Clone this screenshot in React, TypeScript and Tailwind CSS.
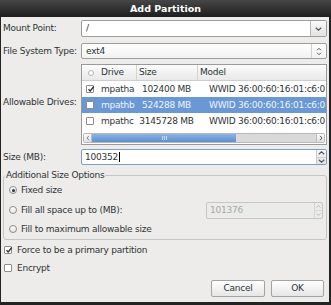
import React from "react";

const Chevron = ({ up = false }: { up?: boolean }) => (
  <svg width="7" height="4" viewBox="0 0 7 4" className={up ? "rotate-180" : ""}>
    <polyline points="0.8,0.8 3.5,3.2 6.2,0.8" fill="none" stroke="#555" strokeWidth="1.2" />
  </svg>
);

const UpDown = ({ color = "#555" }: { color?: string }) => (
  <svg width="6" height="9" viewBox="0 0 6 9">
    <polyline points="1,3.3 3,1.3 5,3.3" fill="none" stroke={color} strokeWidth="1" />
    <polyline points="1,5.7 3,7.7 5,5.7" fill="none" stroke={color} strokeWidth="1" />
  </svg>
);

const Check = () => (
  <svg width="8" height="8" viewBox="0 0 8 8" className="absolute -top-px left-0">
    <polyline points="1.5,4.2 3.2,6 6.8,1.5" fill="none" stroke="#333" strokeWidth="1.3" />
  </svg>
);

const CheckBox = ({ checked = false }: { checked?: boolean }) => (
  <div className="relative w-[8px] h-[8px] shrink-0 border border-[#8c8c8c] bg-white rounded-[1px]">
    {checked && <Check />}
  </div>
);

const Radio = ({ checked = false }: { checked?: boolean }) => (
  <div className="w-[8px] h-[8px] shrink-0 rounded-full border border-[#8c8c8c] bg-gradient-to-b from-white to-[#e4e4e4] flex items-center justify-center">
    {checked && <div className="w-[3px] h-[3px] rounded-full bg-[#2e3436]" />}
  </div>
);

const drives = [
  { name: "mpatha", size: "102400 MB", checked: true, selected: false },
  { name: "mpathb", size: "524288 MB", checked: false, selected: true },
  { name: "mpathc", size: "3145728 MB", checked: false, selected: false },
];

export default function App() {
  return (
    <div className="w-[331px] h-[305px] bg-[#232323] flex flex-col font-['DejaVu_Sans',sans-serif] text-[9px] tracking-[-0.25px] text-[#2e3436] leading-none">
      <div className="h-[17px] shrink-0 flex items-center justify-center bg-gradient-to-b from-[#474747] to-[#1e1e1e] text-white font-bold text-[9.5px] tracking-normal">
        Add Partition
      </div>

      <div className="flex-1 ml-px mr-[2px] mb-[3px] bg-[#edeceb] flex flex-col px-[2px] pt-[3px]">
        {/* Mount point */}
        <div className="flex items-center h-[17px]">
          <div className="w-[78px] shrink-0">Mount Point:</div>
          <div className="flex-1 h-full flex border border-[#9d9d9d] rounded-[2px] bg-white overflow-hidden">
            <div className="flex-1 flex items-center pl-[4px]">/</div>
            <div className="w-[16px] border-l border-[#b9b9b9] bg-gradient-to-b from-[#fafafa] to-[#e2e2e2] flex items-center justify-center">
              <Chevron />
            </div>
          </div>
        </div>

        {/* File system */}
        <div className="flex items-center h-[16px] mt-[6px]">
          <div className="w-[78px] shrink-0">File System Type:</div>
          <div className="flex-1 h-full flex border border-[#9d9d9d] rounded-[2px] bg-gradient-to-b from-white to-[#f2f2f2]">
            <div className="flex-1 flex items-center pl-[4px]">ext4</div>
            <div className="w-[15px] border-l border-[#d0d0d0] flex items-center justify-center">
              <UpDown />
            </div>
          </div>
        </div>

        {/* Drives */}
        <div className="flex items-center mt-[5px]">
          <div className="w-[78px] shrink-0 pb-[4px]">Allowable Drives:</div>
          <div className="flex-1 h-[81px] border border-[#9a9a9a] bg-white flex flex-col overflow-hidden">
            <div className="h-[16px] shrink-0 flex items-stretch bg-gradient-to-b from-[#fbfbfb] to-[#e9e9e9] border-b border-[#cdcdcd]">
              <div className="w-[15px] flex items-center pl-[6px]">
                <div className="w-[6px] h-[6px] rounded-full border border-[#b4b4b4] bg-white" />
              </div>
              <div className="w-[39px] flex items-center pl-[4px]">Drive</div>
              <div className="w-[61px] flex items-center pl-[2px] border-l border-[#d2d2d2]">Size</div>
              <div className="flex-1 flex items-center pl-[2px] border-l border-[#d2d2d2]">Model</div>
            </div>
            {drives.map((d) => (
              <div
                key={d.name}
                className={
                  "h-[16px] shrink-0 flex items-center whitespace-nowrap " +
                  (d.selected ? "bg-[#6a98d4] text-[#eef4fb]" : "")
                }
              >
                <div className="w-[15px] pl-[4px]">
                  <CheckBox checked={d.checked} />
                </div>
                <div className="w-[39px] pl-[4px]">{d.name}</div>
                <div className="w-[61px] text-center">{d.size}</div>
                <div className="flex-1 pl-[12px] overflow-hidden">WWID 36:00:60:16:01:c6:0</div>
              </div>
            ))}
            <div className="flex-1" />
            <div className="h-[10px] mx-px mb-px flex border border-[#b8b8b8] rounded-[2px] bg-[#d9d9d9] overflow-hidden">
              <div className="w-[8px] bg-gradient-to-b from-[#fafafa] to-[#e0e0e0] border-r border-[#bdbdbd] flex items-center justify-center">
                <svg width="4" height="6" viewBox="0 0 4 6">
                  <polyline points="3,0.8 1,3 3,5.2" fill="none" stroke="#888" strokeWidth="1" />
                </svg>
              </div>
              <div className="w-[144px] bg-gradient-to-b from-[#8fb3e2] to-[#5d8fcf] flex items-center justify-center">
                <div className="flex gap-px">
                  <div className="w-px h-[4px] bg-[#c9dbf2]" />
                  <div className="w-px h-[4px] bg-[#c9dbf2]" />
                  <div className="w-px h-[4px] bg-[#c9dbf2]" />
                </div>
              </div>
              <div className="flex-1" />
              <div className="w-[8px] bg-gradient-to-b from-[#fafafa] to-[#e0e0e0] border-l border-[#bdbdbd] flex items-center justify-center">
                <svg width="4" height="6" viewBox="0 0 4 6">
                  <polyline points="1,0.8 3,3 1,5.2" fill="none" stroke="#555" strokeWidth="1" />
                </svg>
              </div>
            </div>
          </div>
        </div>

        {/* Size */}
        <div className="flex items-center h-[16px] mt-[4px]">
          <div className="w-[78px] shrink-0">Size (MB):</div>
          <div className="flex-1 h-full flex border border-[#7d9cc8] rounded-[2px] bg-white overflow-hidden">
            <div className="flex-1 flex items-center pl-[3px]">
              100352
              <div className="w-px h-[10px] bg-black ml-px" />
            </div>
            <div className="w-[10px] flex flex-col border-l border-[#c8c8c8] bg-gradient-to-b from-[#f7f7f7] to-[#e3e3e3]">
              <div className="flex-1 flex items-center justify-center border-b border-[#cfcfcf]">
                <Chevron up />
              </div>
              <div className="flex-1 flex items-center justify-center">
                <Chevron />
              </div>
            </div>
          </div>
        </div>

        {/* Additional options */}
        <fieldset className="mt-[4px] border border-[#c4c4c4] rounded-[3px] pb-[2px]">
          <legend className="ml-px px-px leading-[12px]">Additional Size Options</legend>
          <div className="h-[18px] flex items-center pl-[5px] gap-[4px]">
            <Radio checked />
            <span>Fixed size</span>
          </div>
          <div className="h-[22px] flex items-center pl-[5px] pr-[3px]">
            <Radio />
            <span className="ml-[4px] flex-1">Fill all space up to (MB):</span>
            <div className="w-[117px] h-[17px] flex border border-[#c6c6c6] rounded-[2px] bg-[#ebebea]">
              <div className="flex-1 flex items-center pl-[3px] text-[#a9a9a9]">101376</div>
              <div className="w-[8px] flex flex-col border-l border-[#d4d4d4]">
                <div className="flex-1 flex items-center justify-center border-b border-[#d8d8d8]">
                  <svg width="5" height="3" viewBox="0 0 5 3">
                    <polyline points="0.5,2.5 2.5,0.5 4.5,2.5" fill="none" stroke="#b5b5b5" strokeWidth="0.9" />
                  </svg>
                </div>
                <div className="flex-1 flex items-center justify-center">
                  <svg width="5" height="3" viewBox="0 0 5 3">
                    <polyline points="0.5,0.5 2.5,2.5 4.5,0.5" fill="none" stroke="#b5b5b5" strokeWidth="0.9" />
                  </svg>
                </div>
              </div>
            </div>
          </div>
          <div className="h-[16px] flex items-center pl-[5px] gap-[4px]">
            <Radio />
            <span>Fill to maximum allowable size</span>
          </div>
        </fieldset>

        <div className="h-[18px] flex items-center pl-px gap-[5px] mt-px">
          <CheckBox checked />
          <span>Force to be a primary partition</span>
        </div>
        <div className="h-[18px] flex items-center pl-px gap-[5px]">
          <CheckBox />
          <span>Encrypt</span>
        </div>

        <div className="flex justify-end gap-[6px] mt-[3px] pr-[3px]">
          <button className="w-[54px] h-[17px] border border-[#a3a3a3] rounded-[2px] bg-gradient-to-b from-white to-[#e6e6e6] text-[#2e3436]">
            Cancel
          </button>
          <button className="w-[53px] h-[17px] border border-[#a3a3a3] rounded-[2px] bg-gradient-to-b from-white to-[#e6e6e6] text-[#2e3436]">
            OK
          </button>
        </div>
      </div>
    </div>
  );
}
